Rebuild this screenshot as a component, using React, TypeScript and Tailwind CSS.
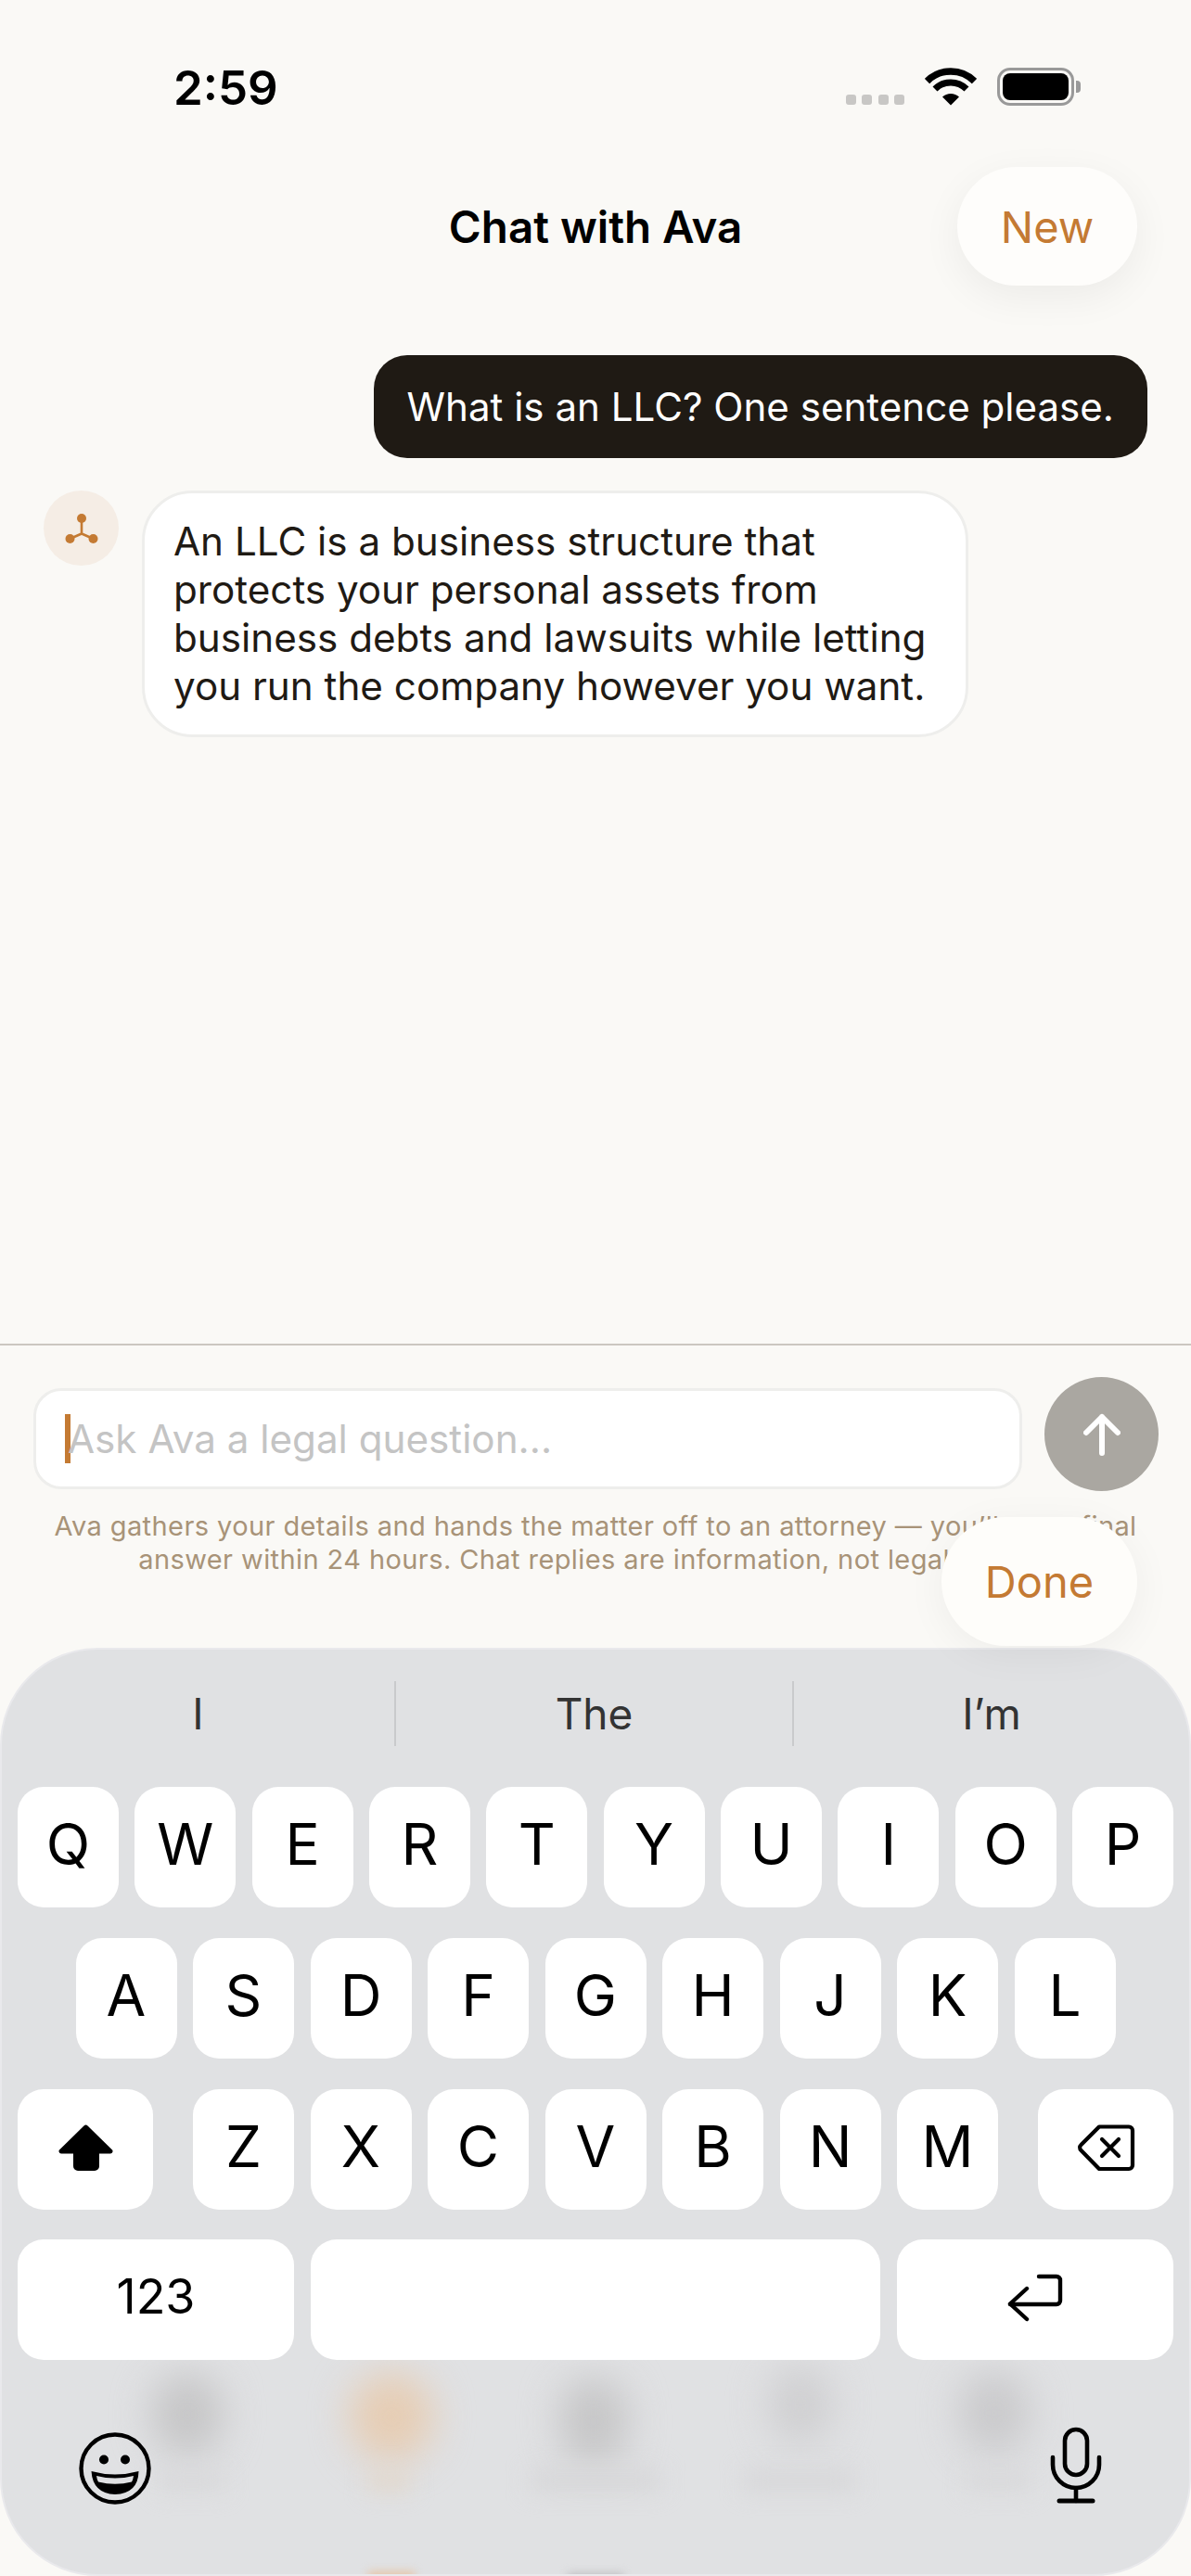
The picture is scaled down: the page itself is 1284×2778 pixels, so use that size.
function Key({ label, className = 'w-[109px]' }: { label?: string; className?: string }) {
  return (
    <div className={`h-[130px] rounded-[28px] bg-white flex items-center justify-center text-[62px] leading-none text-black pb-[6px] ${className}`}>
      {label}
    </div>
  )
}

function Wifi() {
  return (
    <svg width="56" height="41" viewBox="0 0 56 41" fill="none">
      <path d="M2.5 14.5A36 36 0 0 1 53.5 14.5" stroke="#000" strokeWidth="7.5" />
      <path d="M11 23A24 24 0 0 1 45 23" stroke="#000" strokeWidth="7" />
      <path d="M28 40.5L19 31.5A13 13 0 0 1 37 31.5Z" fill="#000" />
    </svg>
  )
}

function StatusBar() {
  return (
    <div className="h-[180px] pt-[67px] pl-[187px] pr-[119px] flex items-start justify-between">
      <span className="text-[51px] leading-[56px] font-semibold text-black">2:59</span>
      <div className="flex items-start pt-[6px]">
        <div className="flex gap-[6.5px] mt-[29px] mr-[22px]">
          {[0, 1, 2, 3].map((i) => (
            <span key={i} className="w-[11px] h-[11px] rounded-[3px] bg-[#c8c7c5]" />
          ))}
        </div>
        <Wifi />
        <div className="ml-[22px] flex items-center">
          <div className="w-[83px] h-[41px] rounded-[14px] border-[3px] border-[#999] p-[3px]">
            <div className="w-full h-full rounded-[8px] bg-black" />
          </div>
          <div className="w-[5px] h-[13px] ml-[2px] rounded-r-[4px] bg-[#999]" />
        </div>
      </div>
    </div>
  )
}

function AvaIcon() {
  return (
    <svg width="40" height="40" viewBox="0 0 40 40" fill="none">
      <path d="M20 9V25.5M20 25.5L7.5 31M20 25.5L32.5 31" stroke="#c47a33" strokeWidth="2.6" />
      <circle cx="20" cy="9" r="5" fill="#c47a33" />
      <circle cx="7.5" cy="31" r="5" fill="#c47a33" />
      <circle cx="32.5" cy="31" r="5" fill="#c47a33" />
    </svg>
  )
}

function Keyboard() {
  return (
    <div className="relative h-[1001px] rounded-[105px] bg-[#e0e1e3] border-[2px] border-[#e9e9ec] overflow-hidden">
      {/* tab bar blurred behind the keyboard */}
      <div className="absolute left-[162px] top-[780px] w-[76px] h-[90px] rounded-full bg-[#c6c6c7] blur-[20px]" />
      <div className="absolute left-[375px] top-[780px] w-[90px] h-[95px] rounded-full bg-[#e6cdb4] blur-[20px]" />
      <div className="absolute left-[602px] top-[785px] w-[72px] h-[95px] rounded-full bg-[#c6c6c7] blur-[20px]" />
      <div className="absolute left-[827px] top-[772px] w-[68px] h-[85px] rounded-full bg-[#cfcfd1] blur-[20px]" />
      <div className="absolute left-[1032px] top-[778px] w-[76px] h-[90px] rounded-full bg-[#cacacc] blur-[20px]" />
      <div className="absolute left-[170px] top-[885px] w-[70px] h-[22px] bg-[#d8d8da] blur-[12px]" />
      <div className="absolute left-[395px] top-[885px] w-[45px] h-[22px] bg-[#e2d8cd] blur-[12px]" />
      <div className="absolute left-[570px] top-[885px] w-[140px] h-[22px] bg-[#d6d6d8] blur-[12px]" />
      <div className="absolute left-[800px] top-[885px] w-[120px] h-[22px] bg-[#d6d6d8] blur-[12px]" />
      <div className="absolute left-[1040px] top-[885px] w-[70px] h-[22px] bg-[#d8d8da] blur-[12px]" />
      <div className="absolute left-[395px] top-[994px] w-[50px] h-[14px] bg-[#e6c6a8] blur-[5px]" />
      <div className="absolute left-[610px] top-[996px] w-[60px] h-[14px] bg-[#bdbdbf] blur-[5px]" />

      <div className="relative pt-[34px]">
        <div className="flex h-[70px] text-[46px] leading-[70px] text-[#333] text-center">
          <div className="w-[425px] border-r-[2px] border-[#c9cacc]">I</div>
          <div className="w-[429px] border-r-[2px] border-[#c9cacc]">The</div>
          <div className="flex-1">I’m</div>
        </div>

        <div className="mt-[44px] px-[17px] flex flex-col gap-[33px]">
          <div className="flex gap-[17.5px]">
            {'QWERTYUIOP'.split('').map((k) => <Key key={k} label={k} />)}
          </div>
          <div className="flex gap-[17.5px] justify-center">
            {'ASDFGHJKL'.split('').map((k) => <Key key={k} label={k} />)}
          </div>
          <div className="flex justify-between">
            <div className="w-[146px] h-[130px] rounded-[28px] bg-white flex items-center justify-center pb-[4px]">
              <svg width="59" height="51" viewBox="14 13 59 51">
                <path d="M41.5 14.5a3 3 0 0 1 4 0L71.5 40a2.5 2.5 0 0 1-1.5 4.5H58V58a5 5 0 0 1-5 5H35a5 5 0 0 1-5-5V44.5H17a2.5 2.5 0 0 1-1.5-4.5Z" fill="#000" />
              </svg>
            </div>
            <div className="flex gap-[17.5px]">
              {'ZXCVBNM'.split('').map((k) => <Key key={k} label={k} />)}
            </div>
            <div className="w-[146px] h-[130px] rounded-[28px] bg-white flex items-center justify-center pb-[4px]">
              <svg width="63" height="52" viewBox="84 8 63 52" fill="none" stroke="#000" strokeWidth="4.2" strokeLinecap="round" strokeLinejoin="round">
                <path d="M108 11.5H140a4 4 0 0 1 4 4V53a4 4 0 0 1-4 4H108L88.5 37a4 4 0 0 1 0-6Z" />
                <path d="M111 25L129 43M129 25L111 43" />
              </svg>
            </div>
          </div>
          <div className="flex gap-[18px] -mt-[1px]">
            <Key label="123" className="w-[298px] !text-[52px]" />
            <Key className="flex-1" />
            <div className="w-[298px] h-[130px] rounded-[28px] bg-white flex items-center justify-center pb-[4px]">
              <svg width="60" height="52" viewBox="11 168 60 52" fill="none" stroke="#000" strokeWidth="4.4" strokeLinecap="round" strokeLinejoin="round">
                <path d="M45 171H64a4 4 0 0 1 4 4V197a4 4 0 0 1-4 4H14" />
                <path d="M32 184L14 200.5L32 217" />
              </svg>
            </div>
          </div>
        </div>

        <div className="mt-[60px] pl-[68px] pr-[72px] flex items-start justify-between">
          <svg className="mt-[5px]" width="110" height="100" viewBox="0 0 110 100" fill="none">
            <circle cx="54" cy="52" r="36.5" stroke="#000" strokeWidth="4.4" />
            <circle cx="42" cy="42.5" r="5" fill="#000" />
            <circle cx="65" cy="42.5" r="5" fill="#000" />
            <path d="M28.5 55Q54 62 79.5 55Q79 79 54 80Q30 79 28.5 55Z" fill="#000" />
            <path d="M34 60Q54 65 74 60Q73.5 64 72 66.5Q54 71 36 66.5Q34.5 64 34 60Z" fill="#dfe0e2" />
          </svg>
          <svg width="100" height="105" viewBox="0 0 100 105" fill="none" stroke="#000" strokeWidth="4.6" strokeLinecap="round">
            <rect x="38" y="15" width="24" height="49" rx="12" />
            <path d="M25 45V53A25 25 0 0 0 75 53V45" />
            <path d="M50 78V92" />
            <path d="M32 92H68" strokeWidth="5" />
          </svg>
        </div>
      </div>
    </div>
  )
}

export default function App() {
  return (
    <div className="relative w-[1284px] h-[2778px] overflow-hidden bg-[#faf9f6] [font-family:Inter,sans-serif] flex flex-col">
      <StatusBar />

      <div className="grid grid-cols-[252px_1fr_252px] items-center h-[128px]">
        <div />
        <h1 className="text-[47.5px] font-semibold text-black text-center pt-[2px]">Chat with Ava</h1>
        <button className="w-[194px] h-[128px] rounded-full bg-[#fefdfb] text-[#c47a33] text-[47px] pt-[2px] shadow-[0_12px_44px_rgba(0,0,0,0.06)]">
          New
        </button>
      </div>

      <div className="flex-1 flex flex-col pt-[75px] pl-[47px] pr-[47px] gap-[35px]">
        <div className="self-end rounded-[36px] bg-[#1f1a14] text-white text-[42.1px] leading-[52px] px-[36px] py-[29.5px]">
          What is an LLC? One sentence please.
        </div>
        <div className="flex items-start gap-[26px]">
          <div className="w-[81px] h-[81px] rounded-full bg-[#f5ede5] flex items-center justify-center">
            <AvaIcon />
          </div>
          <div className="w-[891px] -ml-[1px] rounded-[54px] bg-white border-[3px] border-[#eeeeec] text-[#1f1a14] text-[42.2px] leading-[52px] pl-[31px] pr-[20px] py-[26px]">
            An LLC is a business structure that protects your personal assets from business debts and lawsuits while letting you run the company however you want.
          </div>
        </div>
      </div>

      <div className="border-t-[2px] border-[#cbc7c0] h-[328px]">
        <div className="pt-[34px] pl-[36px] pr-[35px] flex items-end gap-[24px]">
          <div className="flex-1 h-[109px] mb-[2px] rounded-[30px] bg-white border-[3px] border-[#eeeeec] flex items-center pl-[31px]">
            <span className="w-[6px] h-[53px] bg-[#c47a33]" />
            <span className="-ml-[3px] text-[42.2px] text-[#c4c4c4]">Ask Ava a legal question...</span>
          </div>
          <div className="w-[123px] h-[123px] rounded-full bg-[#aaa7a1] flex items-center justify-center">
            <svg width="40" height="46" viewBox="0 0 40 46" fill="none" stroke="#fff" strokeWidth="6" strokeLinecap="round" strokeLinejoin="round">
              <path d="M20 43V4M3 21L20 4L37 21" />
            </svg>
          </div>
        </div>
        <p className="mt-[20px] text-center text-[29px] leading-[36px] tracking-[0.41px] text-[#a89378]">
          Ava gathers your details and hands the matter off to an attorney — you’ll get a final<br />
          answer within 24 hours. Chat replies are information, not legal advice.
        </p>
      </div>

      <Keyboard />

      <button className="absolute left-[1015px] top-[1636px] w-[211px] h-[139px] rounded-full bg-[#fefdfa] text-[#c47a33] text-[47px] pt-[1px] shadow-[0_8px_44px_rgba(0,0,0,0.05)]">
        Done
      </button>
    </div>
  )
}
